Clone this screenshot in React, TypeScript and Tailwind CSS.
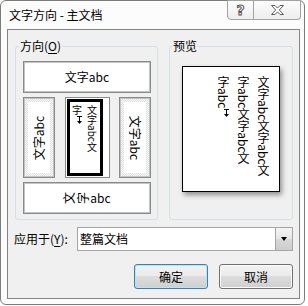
import React from 'react';

const ui = "font-['Microsoft_YaHei','Noto_Sans_CJK_SC',sans-serif]";

const DownArrow = ({ size = 9 }: { size?: number }) => (
  <svg width={7} height={size} viewBox="0 0 7 9" className="inline-block">
    <path d="M1 1.5h5M3.5 1.5v5" stroke="#000" strokeWidth="1" fill="none" />
    <path d="M1 6h5L3.5 9z" fill="#000" />
  </svg>
);

const OptionBox = ({ className, children }: { className?: string; children: React.ReactNode }) => (
  <div className={`border border-[#8a8a8a] shadow-[inset_0_0_0_1px_#c4c4c4] bg-white ${className ?? ''}`}>{children}</div>
);

const DottedBox = ({ children }: { children: React.ReactNode }) => (
  <OptionBox className="w-[32px] h-full p-[4px] bg-[repeating-conic-gradient(#dcdcdc_0_25%,#ffffff_0_50%)] bg-[length:2px_2px]">
    <div className="h-full bg-white flex items-center justify-center overflow-visible">{children}</div>
  </OptionBox>
);

export default function App() {
  return (
    <div className={`w-[308px] h-[306px] bg-white text-black text-[12px] ${ui}`}>
      <div className="w-[305px] h-[305px] rounded-[6px] border border-[#7c7c7c] bg-[#fcfcfc]">
        {/* title bar */}
        <div className="h-[28px] flex items-start justify-between">
          <div className="pl-[8px] pt-[6px] leading-[16px] text-[12px]">文字方向 - 主文档</div>
          <div className="flex mr-[3px] -mt-[1px]">
            <div className="w-[27px] h-[20px] border border-[#a3a3a3] rounded-bl-[4px] bg-[linear-gradient(#fdfdfd,#ededed)] flex items-center justify-center">
              <span className="font-['DejaVu_Sans',sans-serif] text-[14px] font-bold leading-none text-white [-webkit-text-stroke:1px_#555]">?</span>
            </div>
            <div className="w-[47px] h-[20px] border border-l-0 border-[#a3a3a3] rounded-br-[4px] bg-[linear-gradient(#fdfdfd,#ededed)] flex items-center justify-center">
              <svg width="15" height="12" viewBox="0 0 15 12">
                <path
                  d="M1.5 1.5h3.5l2.5 2.6l2.5-2.6h3.5l-4.2 4.5l4.2 4.5h-3.5l-2.5-2.6l-2.5 2.6h-3.5l4.2-4.5z"
                  fill="#fff"
                  stroke="#5a5a5a"
                  strokeWidth="1"
                  strokeLinejoin="round"
                />
              </svg>
            </div>
          </div>
        </div>

        {/* client area */}
        <div className="ml-[6px] w-[293px] h-[270px] border border-[#858585] bg-[#f0f0f0] flex flex-col">
          <div className="flex pl-[7px] gap-[11px] mt-[8px]">
            <fieldset className="w-[143px] h-[182px] border border-[#d5dfe5] rounded-[3px] pl-[7px] pr-[6px] pt-[7px] pb-[5px]">
              <legend className="-ml-[4px] px-[1px] leading-[16px]">
                方向(<span className="underline underline-offset-2">O</span>)
              </legend>
              <div className="flex flex-col gap-[4px] font-['SimSun','Noto_Sans_CJK_SC',sans-serif]">
                <OptionBox className="h-[32px] flex items-center justify-center">文字abc</OptionBox>
                <div className="h-[81px] flex justify-between">
                  <DottedBox>
                    <span className="inline-block -rotate-90 whitespace-nowrap">文字abc</span>
                  </DottedBox>
                  <div className="w-[45px] h-full border border-[#8a8a8a] bg-white p-[1px]">
                    <div className="h-full border-[3px] border-black pt-[3px] text-[10px] leading-[15px] [writing-mode:vertical-rl]">
                      <div className="whitespace-nowrap">文字abc文</div>
                      <div className="whitespace-nowrap">
                        字<DownArrow />
                      </div>
                    </div>
                  </div>
                  <DottedBox>
                    <span className="inline-block rotate-90 whitespace-nowrap">文字abc</span>
                  </DottedBox>
                </div>
                <OptionBox className="h-[32px] flex items-center justify-center">
                  <span className="inline-block w-[12px] leading-[12px] -rotate-90 mr-[2px]">文</span>
                  <span className="inline-block w-[12px] leading-[12px] -rotate-90 mr-[1px]">字</span>
                  <span>abc</span>
                </OptionBox>
              </div>
            </fieldset>

            <fieldset className="w-[124px] h-[182px] border border-[#d5dfe5] rounded-[3px] px-[12px] pt-[12px]">
              <legend className="-ml-[10px] px-[1px] leading-[16px]">预览</legend>
              <div className="w-[98px] h-[126px] border border-black bg-white shadow-[2px_3px_5px_rgba(0,0,0,0.4)] pt-[9px] pr-[6px] flex justify-end">
                <div className="text-[12px] leading-[20px] [writing-mode:vertical-rl] font-['SimSun','Noto_Sans_CJK_SC',sans-serif]">
                  <div className="whitespace-nowrap">文字abc文字abc文</div>
                  <div className="whitespace-nowrap">字abc文字abc文</div>
                  <div className="whitespace-nowrap">
                    字abc<DownArrow />
                  </div>
                </div>
              </div>
            </fieldset>
          </div>

          {/* apply to */}
          <div className="flex items-center mt-[7px] pl-[6px] pr-[6px]">
            <label className="w-[63px] leading-[16px]">
              应用于(<span className="underline underline-offset-2">Y</span>):
            </label>
            <div className="ml-auto w-[216px] h-[24px] border border-[#a5a5a5] bg-white flex">
              <div className="flex-1 pl-[2px] leading-[22px]">整篇文档</div>
              <div className="w-[17px] h-full border-l border-[#a5a5a5] bg-[linear-gradient(#f4f4f4,#e6e6e6_50%,#d8d8d8_50%,#cdcdcd)] flex items-center justify-center">
                <div className="w-0 h-0 border-l-[3.5px] border-r-[3.5px] border-t-[4px] border-l-transparent border-r-transparent border-t-black" />
              </div>
            </div>
          </div>

          {/* buttons */}
          <div className="flex justify-end gap-[11px] mt-[13px] pr-[6px]">
            <button className="w-[74px] h-[25px] rounded-[3px] border border-[#3c7fb1] shadow-[inset_0_0_0_1px_#b8e4fb] bg-[linear-gradient(#f2f2f2,#ebebeb_50%,#dddddd_50%,#cfcfcf)] text-[12px]">
              确定
            </button>
            <button className="w-[74px] h-[25px] rounded-[3px] border border-[#707070] shadow-[inset_0_0_0_1px_#fcfcfc] bg-[linear-gradient(#f2f2f2,#ebebeb_50%,#dddddd_50%,#cfcfcf)] text-[12px]">
              取消
            </button>
          </div>
        </div>
      </div>
    </div>
  );
}
